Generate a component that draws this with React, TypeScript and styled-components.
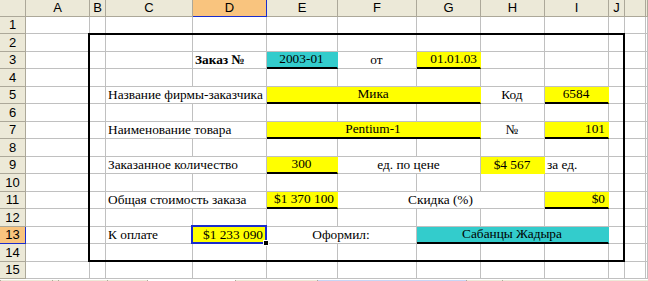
import styled, { createGlobalStyle } from "styled-components";

const GlobalStyle = createGlobalStyle`
  html, body {
    margin: 0;
    padding: 0;
    background: #fff;
    overflow: hidden;
  }
`;

const YELLOW = "#ffff00";
const CYAN = "#33cccc";
const GRID = "#c0c0c0";
const HEAD_BG = "#ece9d8";
const HEAD_LINE = "#aca899";
const SEL = "#1a2ccc";

const COLS = ["A", "B", "C", "D", "E", "F", "G", "H", "I", "J", "", ""];
const ROWS = Array.from({ length: 15 }, (_, i) => i + 1);

const Sheet = styled.div`
  display: grid;
  grid-template-columns: 26px 64px 16px 87px 74px 71px 79px 64px 64px 64px 16px 21px 1fr;
  grid-template-rows: 16.5px repeat(15, 17.5px) 1fr;
  width: 648px;
  height: 281px;
  overflow: hidden;
  font-family: "Liberation Serif", "Times New Roman", "DejaVu Serif", serif;
  font-size: 13.33px;
  color: #000;
`;

const Corner = styled.div`
  grid-row: 1;
  grid-column: 1;
  background: ${HEAD_BG};
  border-right: 1px solid ${HEAD_LINE};
  border-bottom: 1px solid ${HEAD_LINE};
`;

const ColHead = styled.div<{ $c: number; $active?: boolean }>`
  grid-row: 1;
  grid-column: ${(p) => p.$c};
  display: flex;
  align-items: center;
  justify-content: center;
  background: ${(p) => (p.$active ? "#f9c47e" : HEAD_BG)};
  border-right: 1px solid ${(p) => (p.$active ? SEL : HEAD_LINE)};
  border-bottom: 1px solid ${(p) => (p.$active ? SEL : HEAD_LINE)};
  font-family: "Liberation Sans", Arial, sans-serif;
  font-size: 13px;
  line-height: 1;
`;

const RowHead = styled.div<{ $r: number; $active?: boolean }>`
  grid-row: ${(p) => p.$r};
  grid-column: 1;
  display: flex;
  align-items: center;
  justify-content: center;
  background: ${(p) => (p.$active ? "#f9c47e" : HEAD_BG)};
  border-right: 1px solid ${(p) => (p.$active ? SEL : HEAD_LINE)};
  border-bottom: 1px solid ${(p) => (p.$active ? SEL : HEAD_LINE)};
  font-family: "Liberation Sans", Arial, sans-serif;
  font-size: 13px;
  line-height: 1;
`;

const GridCell = styled.div<{ $r: number; $c: number }>`
  grid-row: ${(p) => p.$r};
  grid-column: ${(p) => p.$c};
  background: #fff;
  border-right: 1px solid ${GRID};
  border-bottom: 1px solid ${GRID};
`;

const Field = styled.div<{
  $r: number;
  $c: number;
  $span?: number;
  $fill?: string;
  $align?: "left" | "center" | "right";
  $under?: boolean;
  $bold?: boolean;
}>`
  grid-row: ${(p) => p.$r};
  grid-column: ${(p) => p.$c} / span ${(p) => p.$span ?? 1};
  position: relative;
  display: flex;
  align-items: flex-end;
  justify-content: ${(p) =>
    p.$align === "center" ? "center" : p.$align === "right" ? "flex-end" : "flex-start"};
  padding: 0 3px 1px 2px;
  background: ${(p) => p.$fill ?? "#fff"};
  border-right: 1px solid ${(p) => p.$fill ?? GRID};
  border-bottom: ${(p) => (p.$under ? "2px solid #000" : `1px solid ${p.$fill ?? GRID}`)};
  font-weight: ${(p) => (p.$bold ? 700 : 400)};
  white-space: nowrap;
  line-height: 15px;
`;

const Selected = styled(Field)`
  &::after {
    content: "";
    position: absolute;
    top: -2px;
    left: -2px;
    right: -1px;
    bottom: -1px;
    border: 2px solid ${SEL};
    pointer-events: none;
  }
`;

const Handle = styled.span`
  position: absolute;
  right: -3px;
  bottom: -3px;
  width: 4px;
  height: 4px;
  background: #000;
  border: 1px solid #fff;
  z-index: 2;
`;

const Frame = styled.div`
  grid-row: 3 / 16;
  grid-column: 3 / 12;
  margin: -1px 0 0 -2px;
  border: 2px solid #000;
  pointer-events: none;
`;

const TabStrip = styled.div`
  grid-row: 17;
  grid-column: 1 / -1;
  display: flex;
  background: ${HEAD_BG};
  border-top: 1px solid #fff;
`;

const Tab = styled.div<{ $w: number; $bg?: string }>`
  width: ${(p) => p.$w}px;
  background: ${(p) => p.$bg ?? HEAD_BG};
  border-left: 1px solid ${HEAD_LINE};
`;

export default function App() {
  return (
    <>
      <GlobalStyle />
      <Sheet>
        <Corner />
        {COLS.map((c, i) => (
          <ColHead key={"h" + i} $c={i + 2} $active={c === "D"}>
            {c}
          </ColHead>
        ))}
        {ROWS.map((r) => (
          <RowHead key={"r" + r} $r={r + 1} $active={r === 13}>
            {r}
          </RowHead>
        ))}
        {ROWS.map((r) =>
          COLS.map((_, i) => <GridCell key={r + "-" + i} $r={r + 1} $c={i + 2} />)
        )}

        {/* row 3 */}
        <Field $r={4} $c={5} $bold>Заказ №</Field>
        <Field $r={4} $c={6} $fill={CYAN} $align="center" $under>2003-01</Field>
        <Field $r={4} $c={7} $align="center">от</Field>
        <Field $r={4} $c={8} $fill={YELLOW} $align="right" $under>01.01.03</Field>

        {/* row 5 */}
        <Field $r={6} $c={4} $span={2}>Название фирмы-заказчика</Field>
        <Field $r={6} $c={6} $span={3} $fill={YELLOW} $align="center" $under>Мика</Field>
        <Field $r={6} $c={9} $align="center">Код</Field>
        <Field $r={6} $c={10} $fill={YELLOW} $align="center" $under>6584</Field>

        {/* row 7 */}
        <Field $r={8} $c={4} $span={2}>Наименование товара</Field>
        <Field $r={8} $c={6} $span={3} $fill={YELLOW} $align="center" $under>Pentium-1</Field>
        <Field $r={8} $c={9} $align="center">№</Field>
        <Field $r={8} $c={10} $fill={YELLOW} $align="right" $under>101</Field>

        {/* row 9 */}
        <Field $r={10} $c={4} $span={2}>Заказанное количество</Field>
        <Field $r={10} $c={6} $fill={YELLOW} $align="center" $under>300</Field>
        <Field $r={10} $c={7} $span={2} $align="center">ед. по цене</Field>
        <Field $r={10} $c={9} $fill={YELLOW} $align="center">$4 567</Field>
        <Field $r={10} $c={10}>за ед.</Field>

        {/* row 11 */}
        <Field $r={12} $c={4} $span={2}>Общая стоимость заказа</Field>
        <Field $r={12} $c={6} $fill={YELLOW} $align="right" $under>$1 370 100</Field>
        <Field $r={12} $c={7} $span={3} $align="center">Скидка (%)</Field>
        <Field $r={12} $c={10} $fill={YELLOW} $align="right" $under>$0</Field>

        {/* row 13 */}
        <Field $r={14} $c={4}>К оплате</Field>
        <Selected $r={14} $c={5} $fill={YELLOW} $align="right">
          $1 233 090
          <Handle />
        </Selected>
        <Field $r={14} $c={6} $span={2} $align="center">Оформил:</Field>
        <Field $r={14} $c={8} $span={3} $fill={CYAN} $align="center" $under>Сабанцы Жадыра</Field>

        <Frame />

        <TabStrip>
          <Tab $w={52} />
          <Tab $w={5} />
          <Tab $w={48} />
          <Tab $w={40} />
          <Tab $w={88} $bg="#fff" />
          <Tab $w={82} />
          <Tab $w={150} $bg="#c8d6f5" />
          <Tab $w={36} />
          <Tab $w={147} />
        </TabStrip>
      </Sheet>
    </>
  );
}
